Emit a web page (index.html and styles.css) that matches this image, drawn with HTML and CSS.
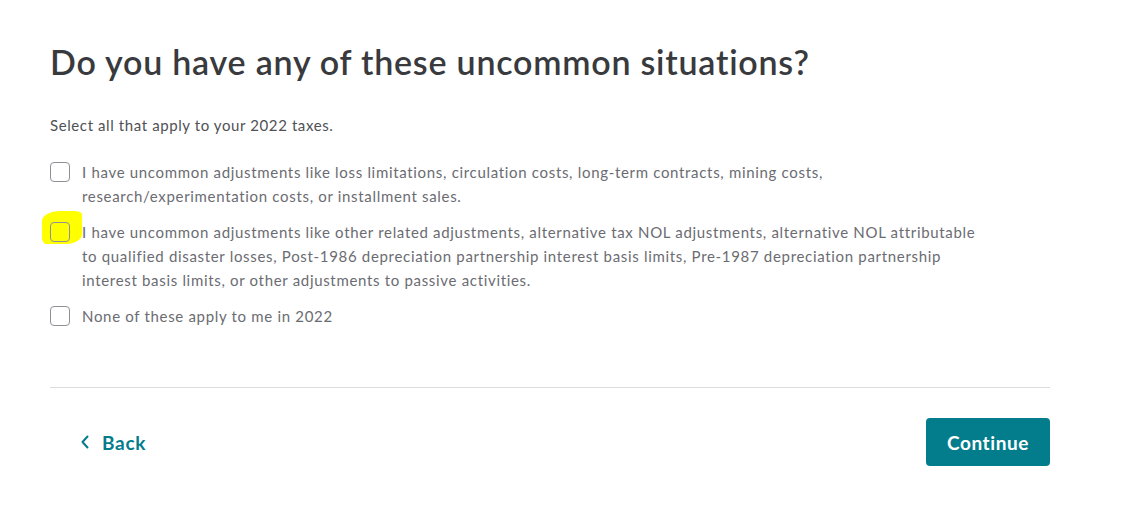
FILE: index.html
```html
<!DOCTYPE html>
<html lang="en">
<head>
    <meta charset="UTF-8">
    <meta name="viewport" content="width=device-width, initial-scale=1.0">
    <title>Uncommon situations</title>
    <link rel="stylesheet" href="styles.css">
</head>
<body>
    <div class="page">
        <h1>Do you have any of these uncommon situations?</h1>
        <p class="hint">Select all that apply to your 2022 taxes.</p>

        <div class="options">
            <label class="option">
                <span class="box"></span>
                <span class="text">I have uncommon adjustments like loss limitations, circulation costs, long-term contracts, mining costs, research/experimentation costs, or installment sales.</span>
            </label>
            <label class="option">
                <span class="box-wrap"><span class="marker"></span><span class="box"></span></span>
                <span class="text">I have uncommon adjustments like other related adjustments, alternative tax NOL adjustments, alternative NOL attributable to qualified disaster losses, Post-1986 depreciation partnership interest basis limits, Pre-1987 depreciation partnership interest basis limits, or other adjustments to passive activities.</span>
            </label>
            <label class="option">
                <span class="box"></span>
                <span class="text">None of these apply to me in 2022</span>
            </label>
        </div>

        <div class="footer">
            <button class="back-btn">
                <svg width="10" height="14" viewBox="0 0 10 14"><path d="M7.5 1.5 L2.5 7 L7.5 12.5" fill="none" stroke="currentColor" stroke-width="2" stroke-linecap="round" stroke-linejoin="round"/></svg>
                Back
            </button>
            <button class="continue-btn">Continue</button>
        </div>
    </div>
</body>
</html>
```

FILE: styles.css
```css
body {
    margin: 0;
    background-color: #ffffff;
    font-family: Lato, "Open Sans", sans-serif;
    color: #393a3d;
}
.page {
    width: 1000px;
    padding: 40px 0 0 50px;
}
h1 {
    margin: 0;
    font-size: 34px;
    font-weight: 600;
    line-height: 44px;
    letter-spacing: 0.77px;
    color: #393a3d;
}
.hint {
    margin: 29px 0 0;
    font-size: 15px;
    line-height: 24px;
    letter-spacing: 0.6px;
    color: #4f5156;
}
.options {
    margin-top: 23px;
    display: flex;
    flex-direction: column;
    gap: 12px;
}
.option {
    display: flex;
    align-items: flex-start;
    gap: 12px;
    font-size: 15px;
    line-height: 24px;
    letter-spacing: 0.68px;
    color: #6b6c72;
}
.text {
    max-width: 900px;
}
.box-wrap {
    position: relative;
    display: flex;
}
.box {
    flex: none;
    width: 18px;
    height: 18px;
    margin-top: 2px;
    border: 1px solid #8d9096;
    border-radius: 4px;
    background: transparent;
    position: relative;
}
.marker {
    position: absolute;
    left: -8px;
    top: -9px;
    width: 40px;
    height: 33px;
    background: #ffff00;
    border-radius: 45% 20% 40% 10% / 30% 10% 30% 20%;
}
.footer {
    margin-top: 59px;
    border-top: 1px solid #dcdcdc;
    padding-top: 30px;
    display: flex;
    justify-content: space-between;
    align-items: center;
}
button {
    font-family: Lato, "Open Sans", sans-serif;
    cursor: pointer;
}
.back-btn {
    margin-left: 30px;
    display: flex;
    align-items: center;
    gap: 12px;
    background: none;
    border: none;
    color: #037c8c;
    font-size: 19px;
    font-weight: 700;
    letter-spacing: 0.7px;
    padding: 0;
}
.continue-btn {
    width: 124px;
    height: 48px;
    background-color: #037c8c;
    color: #ffffff;
    border: none;
    border-radius: 4px;
    font-size: 19px;
    font-weight: 700;
    letter-spacing: 0.6px;
}
```
